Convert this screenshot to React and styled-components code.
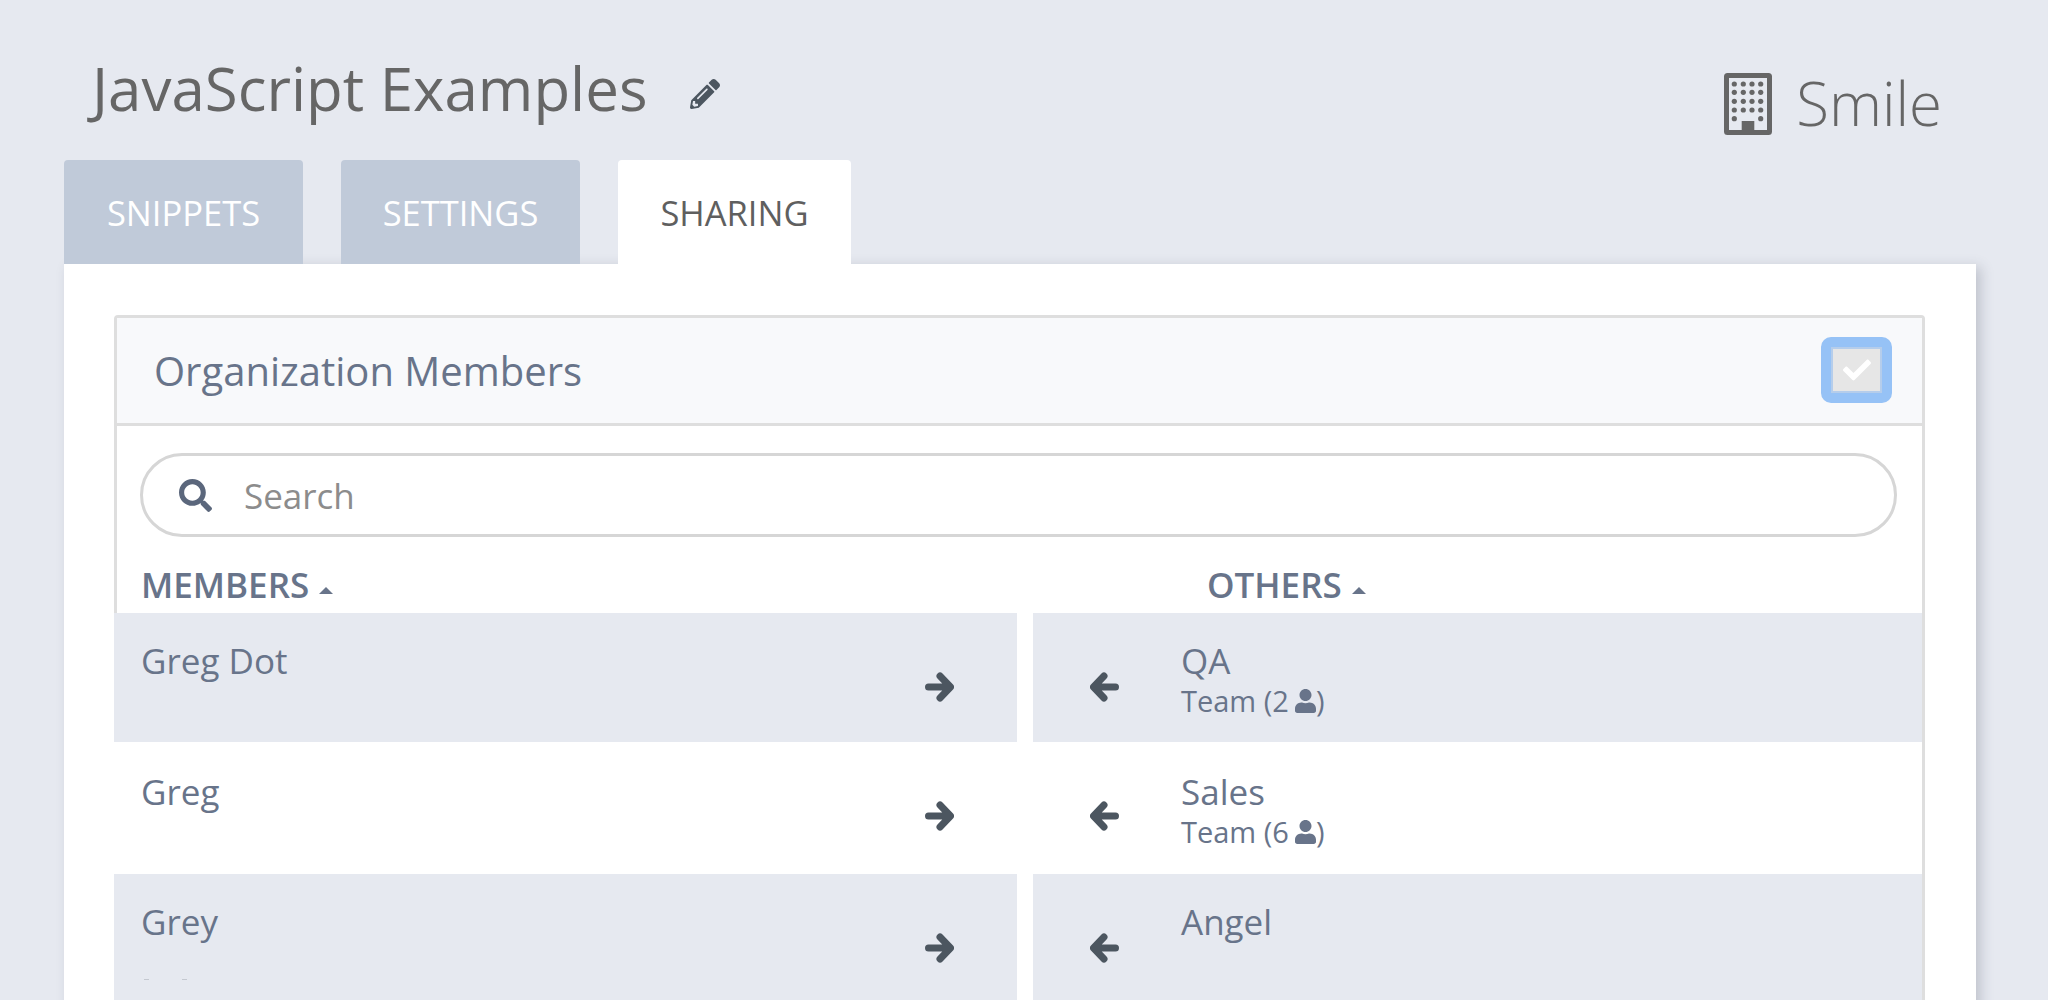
import React from "react";
import styled, { createGlobalStyle } from "styled-components";
import { FaPencilAlt, FaSearch, FaUser, FaCheck } from "react-icons/fa";

const GlobalStyle = createGlobalStyle`
  html, body {
    margin: 0;
    height: 1000px;
    overflow: hidden;
    background: #e6e9f0;
    font-family: "Open Sans", "Liberation Sans", sans-serif;
  }
  * { box-sizing: border-box; }
`;

const Page = styled.div`
  height: 1000px;
  padding-left: 64px;
  padding-right: 72px;
  overflow: hidden;
`;

const Header = styled.header`
  display: flex;
  justify-content: space-between;
  height: 160px;
  padding: 0 34px 0 28px;
`;

const TitleGroup = styled.div`
  display: flex;
  align-items: flex-start;
  padding-top: 58px;
`;

const Title = styled.h1`
  margin: 0;
  font-size: 60px;
  font-weight: 400;
  color: #666;
  line-height: 1;
`;

const EditIcon = styled(FaPencilAlt)`
  width: 30px;
  height: 30px;
  margin-left: 42px;
  margin-top: 21px;
  color: #4c5660;
`;

const Org = styled.div`
  display: flex;
  align-items: flex-start;
  padding-top: 73px;
  gap: 24px;
`;

const OrgName = styled.span`
  font-size: 60px;
  font-weight: 300;
  line-height: 1;
  color: #666;
`;

const Tabs = styled.nav`
  display: flex;
  gap: 38px;
  height: 104px;
`;

const Tab = styled.div`
  display: flex;
  align-items: center;
  justify-content: center;
  width: ${(p) => (p.$active ? 233 : 239)}px;
  border-radius: 4px 4px 0 0;
  font-size: 34.5px;
  font-weight: 500;
  background: ${(p) => (p.$active ? "#fff" : "#c0cad9")};
  color: ${(p) => (p.$active ? "#5f5f5f" : "#fff")};
`;

const Panel = styled.main`
  height: 800px;
  padding: 51px 51px 0 50px;
  background: #fff;
  box-shadow: 5px 3px 12px rgba(60, 65, 80, 0.22);
`;

const Box = styled.section`
  height: 760px;
  border: 3px solid #dedede;
  border-bottom: 0;
  border-radius: 4px 4px 0 0;
`;

const BoxHeader = styled.div`
  display: flex;
  align-items: center;
  justify-content: space-between;
  height: 108px;
  padding: 0 30px 0 37px;
  background: #f8f9fb;
  border-bottom: 3px solid #dedede;
  font-size: 40px;
  color: #68748a;
`;

const CheckBox = styled.div`
  display: flex;
  align-items: center;
  justify-content: center;
  width: 71px;
  height: 66px;
  margin-top: -2px;
  border: 10px solid #96c2f6;
  border-radius: 10px;
  background: #e6e6e6;
  box-shadow: inset 0 0 0 2px #b5cdeb;
  color: #fff;
  font-size: 28px;
`;

const SearchBar = styled.div`
  display: flex;
  align-items: center;
  height: 84px;
  margin: 27px 25px 0 23px;
  padding-left: 36px;
  border: 3px solid #d6d6d6;
  border-radius: 42px;
  font-size: 35px;
  color: #8c8c8c;
`;

const SearchIcon = styled(FaSearch)`
  width: 33px;
  height: 33px;
  color: #5b677c;
  margin-right: 32px;
`;

const Columns = styled.div`
  display: grid;
  grid-template-columns: 903px 889px;
  column-gap: 16px;
  margin-left: -3px;
`;

const ColumnTitle = styled.div`
  display: flex;
  align-items: center;
  height: 76px;
  padding-left: ${(p) => p.$indent}px;
  padding-top: 19px;
  font-size: 35px;
  font-weight: 600;
  color: #68748a;
`;

const Caret = styled.span`
  width: 0;
  height: 0;
  margin-left: 10px;
  margin-top: 12px;
  border-left: 7px solid transparent;
  border-right: 7px solid transparent;
  border-bottom: 7px solid #68748a;
`;

const Cell = styled.div`
  display: flex;
  justify-content: ${(p) => (p.$side === "left" ? "space-between" : "flex-start")};
  height: ${(p) => p.$height}px;
  padding: ${(p) => (p.$side === "left" ? "0 63px 0 27px" : "0 0 0 57px")};
  background: ${(p) => (p.$shaded ? "#e6e9f0" : "#fff")};
`;

const ArrowSlot = styled.div`
  display: flex;
  align-items: center;
  height: 30px;
  margin-top: 59px;
`;

const Info = styled.div`
  margin-left: 62px;
`;

const Name = styled.div`
  margin-top: ${(p) => p.$top}px;
  font-size: 35px;
  line-height: 46px;
  color: #68748a;
`;

const Sub = styled.div`
  display: flex;
  align-items: center;
  font-size: 29px;
  line-height: 34px;
  color: #68748a;
`;

const UserIcon = styled(FaUser)`
  width: 21px;
  height: 24px;
  margin-left: 6px;
`;

// two faint marks left in the picture under the third name
const Smudges = styled.div`
  display: flex;
  gap: 33px;
  margin: 34px 0 0 3px;
`;

const Smudge = styled.span`
  width: 5px;
  height: 1px;
  background: #c4c8d0;
`;

function BuildingIcon() {
  const cols = [10.3, 19.3, 28, 36.7];
  const rows = [11, 19.3, 28.3, 37];
  return (
    <svg width="48" height="62" viewBox="0 0 48 62" fill="#666">
      <rect x="2.5" y="2.5" width="43" height="57" rx="1" fill="none" stroke="#666" strokeWidth="5" />
      {rows.map((y) => cols.map((x) => <circle key={`${x}-${y}`} cx={x} cy={y} r="2.6" />))}
      <circle cx="10.3" cy="45.7" r="2.6" />
      <circle cx="36.7" cy="45.7" r="2.6" />
      <rect x="17.7" y="48" width="12.6" height="11" />
    </svg>
  );
}

function Arrow({ flip }) {
  return (
    <svg width="29" height="30" viewBox="0 0 29 30" style={flip ? { transform: "scaleX(-1)" } : undefined}>
      <path
        d="M3.5 15H25M15 4l10.5 11L15 26"
        fill="none"
        stroke="#4c5660"
        strokeWidth="7"
        strokeLinecap="round"
        strokeLinejoin="round"
      />
    </svg>
  );
}

const rows = [
  { left: "Greg Dot", right: "QA", sub: "Team (2", height: 129, top: 25, shaded: true },
  { left: "Greg", right: "Sales", sub: "Team (6", height: 132, top: 27, shaded: false },
  { left: "Grey", right: "Angel", height: 132, top: 25, shaded: true, smudged: true },
];

export default function App() {
  return (
    <Page>
      <GlobalStyle />
      <Header>
        <TitleGroup>
          <Title>JavaScript Examples</Title>
          <EditIcon />
        </TitleGroup>
        <Org>
          <BuildingIcon />
          <OrgName>Smile</OrgName>
        </Org>
      </Header>
      <Tabs>
        <Tab>SNIPPETS</Tab>
        <Tab>SETTINGS</Tab>
        <Tab $active>SHARING</Tab>
      </Tabs>
      <Panel>
        <Box>
          <BoxHeader>
            Organization Members
            <CheckBox>
              <FaCheck />
            </CheckBox>
          </BoxHeader>
          <SearchBar>
            <SearchIcon />
            Search
          </SearchBar>
          <Columns>
            <ColumnTitle $indent={27}>
              MEMBERS
              <Caret />
            </ColumnTitle>
            <ColumnTitle $indent={174}>
              OTHERS
              <Caret />
            </ColumnTitle>
            {rows.map((row) => (
              <React.Fragment key={row.left}>
                <Cell $side="left" $height={row.height} $shaded={row.shaded}>
                  <div>
                    <Name $top={row.top}>{row.left}</Name>
                    {row.smudged && (
                      <Smudges>
                        <Smudge />
                        <Smudge />
                      </Smudges>
                    )}
                  </div>
                  <ArrowSlot>
                    <Arrow />
                  </ArrowSlot>
                </Cell>
                <Cell $side="right" $height={row.height} $shaded={row.shaded}>
                  <ArrowSlot>
                    <Arrow flip />
                  </ArrowSlot>
                  <Info>
                    <Name $top={row.top}>{row.right}</Name>
                    {row.sub && (
                      <Sub>
                        {row.sub}
                        <UserIcon />)
                      </Sub>
                    )}
                  </Info>
                </Cell>
              </React.Fragment>
            ))}
          </Columns>
        </Box>
      </Panel>
    </Page>
  );
}
